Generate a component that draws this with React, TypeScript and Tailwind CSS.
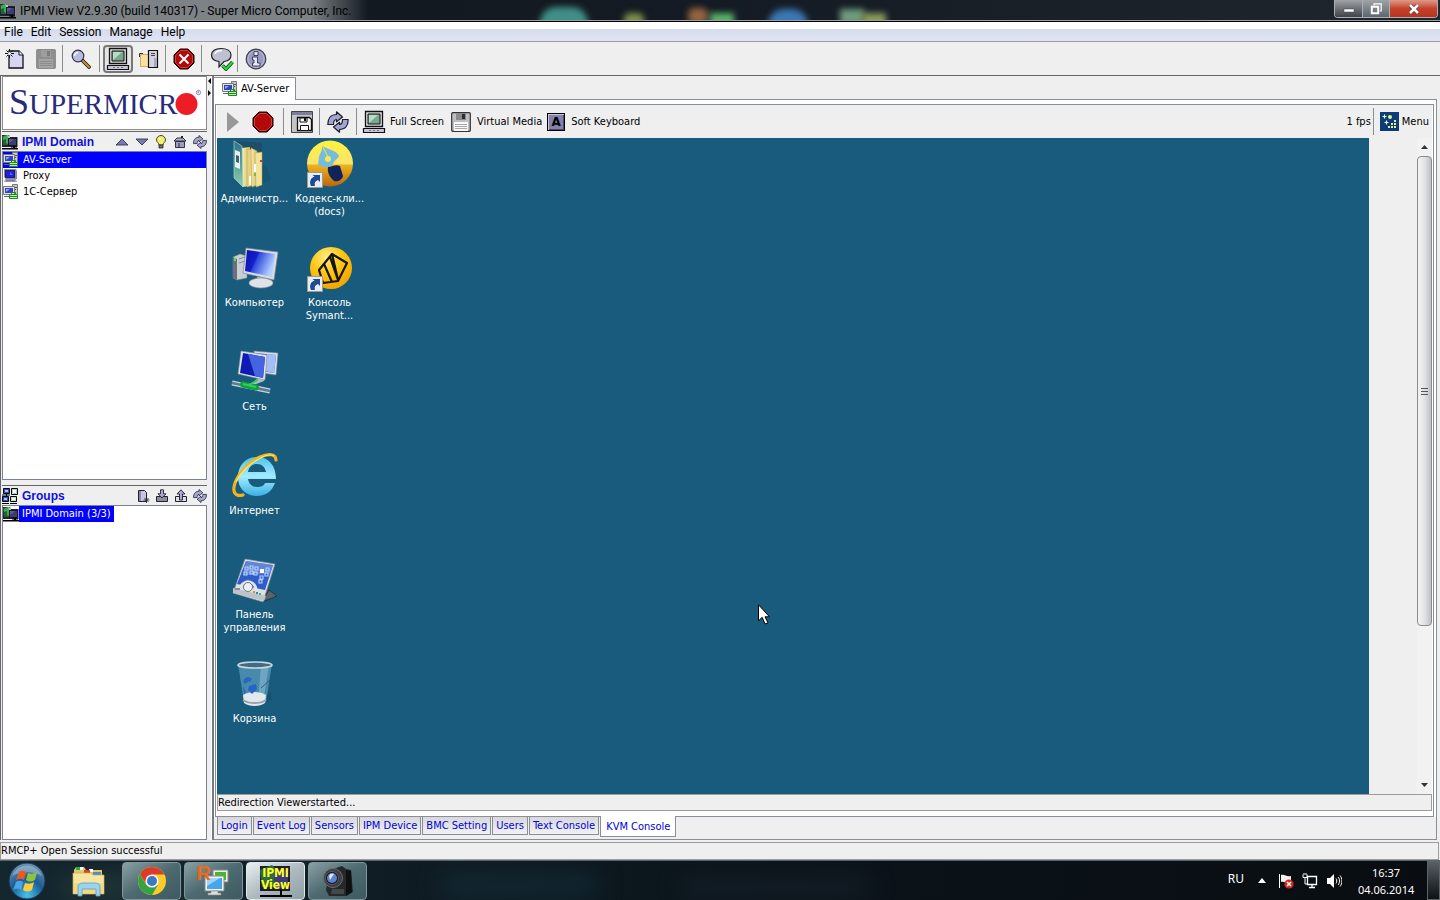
import type { ReactNode } from "react";

type IconProps = { className?: string };

/* ---------- small tree / header icons ---------- */

function DomainIcon({ className = "w-4 h-4" }: IconProps) {
  return (
    <svg viewBox="0 0 16 16" className={`shrink-0 ${className}`} aria-hidden="true">
      <path d="M0 1h7l1 2h8v10H0z" fill="#20222e" />
      <path d="M0 2l4-1 2 2v8H1z" fill="#2a5c38" />
      <path d="M1 3l4-2 1 1v8l-2-1V5L1 6z" fill="#3fae52" />
      <path d="M5 1l3 1v2H6z" fill="#9fd8a8" />
      <path d="M6 4h9v8H6z" fill="#15171d" />
      <path d="M7 5h7v6H7z" fill="#3d3d74" />
      <path d="M7 5h5L7 9z" fill="#5c5c98" />
      <path d="M15 3h1v10h-1z" fill="#8a8a98" />
      <path d="M0 14h16v1.500H0zM11 12h2v3h-2zM9 12.500h6v1H9z" fill="#000" />
    </svg>
  );
}

function ServerIcon({ className = "w-4 h-4" }: IconProps) {
  return (
    <svg viewBox="0 0 16 16" className={className} aria-hidden="true">
      <path d="M9.500.5h5v14h-5z" fill="#c9c9c9" stroke="#777" />
      <path d="M11 3.500h3M11 5.500h2" stroke="#555" />
      <path d="M.5 2.500h11v8H.5z" fill="#e2e2ea" stroke="#777" />
      <path d="M2 4h8v5H2z" fill="#2f44c0" />
      <path d="M3 5h4L3 8z" fill="#93a4f0" />
      <path d="M1 12.500h6" stroke="#666" />
      <path d="M6.500 10.500h8v4h-8z" fill="#c6f0a8" stroke="#1c8a20" />
      <path d="M8.500 10.500v-2h4v2M6.500 12.500h8" stroke="#1c8a20" fill="none" />
    </svg>
  );
}

function ProxyIcon({ className = "w-4 h-4" }: IconProps) {
  return (
    <svg viewBox="0 0 16 16" className={className} aria-hidden="true">
      <path d="M1 1h12l1 2v8H3L1 9z" fill="#8888a8" />
      <path d="M2 2h10v8H2z" fill="#20205c" />
      <path d="M3 3h8v6H3z" fill="#1d1df0" />
      <path d="M7 4l3 3H7z" fill="#5c7cff" />
      <path d="M2 11h11l1 3H1z" fill="#a9a9bd" />
      <path d="M3 12h9M3 13h9" stroke="#5d5d78" strokeWidth=".6" />
    </svg>
  );
}

function GroupsIcon({ className = "w-4 h-4" }: IconProps) {
  return (
    <svg viewBox="0 0 16 16" className={className} aria-hidden="true">
      <g stroke="#000">
        <path d="M1.500.5h6v5h-6z" fill="#2a4fd8" />
        <path d="M9.500.5h6v6h-6z" fill="#a7d8d8" />
        <path d="M.5 8.500h6v5h-6z" fill="#2a4fd8" />
        <path d="M8.500 8.500h6v5h-6z" fill="#bfe3d5" />
        <path d="M0 7h8M0 15.500h7M8 15.500h7M4.500 6v3" fill="none" />
      </g>
      <path d="M3 2h3v2H3zM2 10h3v2H2z" fill="#a8c4ff" />
      <path d="M11 2h3v3h-3zM10 10h3v2h-3z" fill="#f2fffa" />
    </svg>
  );
}

function RefreshIcon({ className = "w-4 h-4" }: IconProps) {
  const arrow = "M.8 13.500C.8 7 4 3.500 9.500 3.500V.8L15.500 6l-6 4.800V8.500c-2 0-3 2-3 5z";
  return (
    <svg viewBox="0 0 22 22" className={className} aria-hidden="true">
      <g fill="#a4a4d0" stroke="#1c1c30" strokeWidth="1.200" strokeLinejoin="round">
        <path d={arrow} />
        <path d={arrow} transform="rotate(180 11 11)" />
      </g>
    </svg>
  );
}

function TriangleIcon({ down = false }: { down?: boolean }) {
  return (
    <svg viewBox="0 0 14 8" className="h-2 w-3.5" aria-hidden="true">
      <path d={down ? "M1 1h12L7 7z" : "M1 7h12L7 1z"} fill="#7a7ab8" stroke="#33334a" strokeWidth=".9" />
    </svg>
  );
}

function BulbIcon() {
  return (
    <svg viewBox="0 0 12 16" className="h-4 w-3" aria-hidden="true">
      <path d="M6 1.500A4.500 4.500 0 0 0 1.500 6c0 2 2.500 3 2.500 5h4c0-2 2.500-3 2.500-5A4.500 4.500 0 0 0 6 1.500z" fill="#f5f06a" stroke="#44421a" />
      <path d="M4 4h2v2H4z" fill="#fff" />
      <path d="M4 11h4v3H4z" fill="#77756a" stroke="#222" strokeWidth=".8" />
    </svg>
  );
}

function HomeIcon() {
  return (
    <svg viewBox="0 0 14 14" className="size-3.5" aria-hidden="true">
      <path d="M2.500 6.500h9v6h-9z" fill="#9c9cc4" stroke="#222" strokeWidth=".9" />
      <path d="M1 6l3-3h6l3 3z" fill="#b4b4d8" stroke="#222" strokeWidth=".9" />
      <path d="M5 8h2v4H5z" fill="#666688" />
      <path d="M8 1h2v2H8z" fill="#222" />
    </svg>
  );
}

function GroupPageIcon() {
  return (
    <svg viewBox="0 0 14 14" className="size-3.5" aria-hidden="true">
      <path d="M2.500 1.500h6l2 2v9h-8z" fill="#c5c5e2" stroke="#222" />
      <path d="M3 2h2v10H3z" fill="#8888b8" />
      <path d="M10.500 8v6M7.500 11h6M8.500 9l4 4M12.500 9l-4 4" stroke="#222" strokeWidth=".8" />
    </svg>
  );
}

function TrayArrowIcon({ up = false }: { up?: boolean }) {
  return (
    <svg viewBox="0 0 14 14" className="size-3.5" aria-hidden="true">
      <path d="M1.500 7.500h11v5h-11z" fill={up ? "#dcdcec" : "#8c8ca0"} stroke="#222" />
      <path
        d={up ? "M7 .8L11 5H8.500v6h-3V5H3z" : "M5.500.8h3v4H11L7 9 3 4.800h2.500z"}
        fill="#a8a8d8"
        stroke="#222"
        strokeWidth=".9"
      />
    </svg>
  );
}

/* ---------- toolbar icons ---------- */

function NewIcon() {
  return (
    <svg viewBox="0 0 20 22" className="h-[22px] w-5" aria-hidden="true">
      <path d="M4 3h10l4 4v13H4z" fill="#d6d6f2" stroke="#111" strokeWidth="1.300" />
      <path d="M14 3v4h4" fill="#fff" stroke="#111" />
      <path d="M4.500 1v9M0 5.500h9M1.500 2.500l6 6M7.500 2.500l-6 6" stroke="#111" />
      <circle cx="4.500" cy="5.500" r="1.500" fill="#fff" />
    </svg>
  );
}

function FloppyIcon({ muted = false }: { muted?: boolean }) {
  return (
    <svg viewBox="0 0 20 20" className="size-5" aria-hidden="true">
      <rect x=".7" y=".7" width="18.600" height="18.600" rx="1" fill={muted ? "#8f8f8f" : "#bfbfc2"} stroke={muted ? "#8a8a8a" : "#333"} strokeWidth="1.200" />
      <path d="M5 1h10v7H5z" fill={muted ? "#9d9d9d" : "#8b8b8f"} />
      <path d="M11 2h3v5h-3z" fill={muted ? "#7c7c7c" : "#2d2d2d"} />
      <path d="M3 10h14v9H3z" fill={muted ? "#a5a5a5" : "#f7f7f7"} />
      <path d="M4 12.500h12M4 14.500h12M4 16.500h12" stroke={muted ? "#8c8c8c" : "#a9a9a9"} />
    </svg>
  );
}

function SearchIcon() {
  return (
    <svg viewBox="0 0 20 20" className="size-5" aria-hidden="true">
      <path d="M11 11l7 7" stroke="#111" strokeWidth="3.600" strokeLinecap="round" />
      <path d="M12 12l6 6" stroke="#c68a3e" strokeWidth="2.200" strokeLinecap="round" />
      <circle cx="7" cy="7" r="5.800" fill="#b9bce0" stroke="#33334c" strokeWidth="1.200" />
      <path d="M3.500 7A3.500 3.500 0 0 1 7 3.500" stroke="#fff" strokeWidth="1.500" fill="none" />
    </svg>
  );
}

function ScreenIcon() {
  return (
    <svg viewBox="0 0 24 24" className="size-6 shrink-0" aria-hidden="true">
      <path d="M3.500 1.500h17v15h-17z" fill="#dededf" stroke="#111" strokeWidth="1.300" />
      <path d="M6 4h12v10H6z" fill="#79a890" stroke="#111" />
      <path d="M7 5h9l-9 8z" fill="#b9dcc8" />
      <path d="M1.500 18.500h21v4h-21z" fill="#c6c4d8" stroke="#111" strokeWidth="1.200" />
      <path d="M7 20.500h2M11 20.500h2M15 20.500h2" stroke="#77758c" />
    </svg>
  );
}

function CopyIcon() {
  return (
    <svg viewBox="0 0 20 20" className="size-5" aria-hidden="true">
      <path d="M1.500 5.500h9v12h-9z" fill="#f6e2a4" stroke="#d9a95c" />
      <path d="M.5 8V4.500H4" fill="none" stroke="#333" />
      <path d="M9.500 1.500h9v17h-9z" fill="#d3d3e0" stroke="#111" strokeWidth="1.200" />
      <path d="M12 4.500h4M12 6.500h4" stroke="#444" />
      <path d="M15 9h3v9h-3z" fill="#a8a8be" />
    </svg>
  );
}

function OctagonIcon({ cross = false }: { cross?: boolean }) {
  return (
    <svg viewBox="0 0 22 22" className="size-[22px]" aria-hidden="true">
      <path d="M7 1h8l6 6v8l-6 6H7l-6-6V7z" fill="#5c0000" stroke="#2a0000" />
      <path d="M7.500 2.500h7l5 5v7l-5 5h-7l-5-5v-7z" fill="#b50808" stroke="#d66" strokeWidth=".7" />
      {cross && <path d="M6.500 6.500l9 9M15.500 6.500l-9 9" stroke="#fff" strokeWidth="2" />}
    </svg>
  );
}

function ChatIcon() {
  return (
    <svg viewBox="0 0 24 24" className="size-6" aria-hidden="true">
      <path d="M11 1.500c6 0 10 2.500 10 6.500s-3 6-7 6.500L9 20v-5.500C4 14 1.500 12 1.500 8S5 1.500 11 1.500z" fill="#c0c0d4" stroke="#222" strokeWidth="1.200" />
      <path d="M5 7c1-3 4-3.500 7-3.500" stroke="#fff" fill="none" strokeWidth="1.300" />
      <path d="M12.500 18.500l3.500 3.500 6.500-7" stroke="#064d0c" strokeWidth="3.600" fill="none" />
      <path d="M12.500 18.500l3.500 3.500 6.500-7" stroke="#2fd544" strokeWidth="2" fill="none" />
    </svg>
  );
}

function InfoIcon() {
  return (
    <svg viewBox="0 0 22 22" className="size-[22px]" aria-hidden="true">
      <circle cx="11" cy="11" r="9.800" fill="#9a9ac0" stroke="#3a3a50" strokeWidth="1.200" />
      <circle cx="11" cy="11" r="8.200" fill="none" stroke="#c8c8e0" strokeWidth=".8" />
      <path d="M9 3.500h4v4H9zM7.500 9h5v6H15v3H7.500v-3H9v-3H7.500z" fill="#e8e8f8" stroke="#333348" strokeWidth=".9" />
    </svg>
  );
}

function SaveScreenIcon() {
  return (
    <svg viewBox="0 0 24 24" className="size-6" aria-hidden="true">
      <path d="M1.500 1.500h21v21h-21z" fill="#c4c4c8" stroke="#444" />
      <path d="M2 2h20v3H2z" fill="#7d7d9c" />
      <path d="M7.500 7.500h12l2 2v11h-14z" fill="#f4f4f4" stroke="#111" strokeWidth="1.300" />
      <path d="M10 8h7v4h-7zM10.500 15.500h8v5h-8z" fill="#fff" stroke="#111" />
      <path d="M14 8h2v3h-2z" fill="#111" />
    </svg>
  );
}

function KeyAIcon() {
  return (
    <span className="flex size-[18px] items-center justify-center border border-black bg-[#8482a8] font-['DejaVu_Sans'] text-[12px] leading-none font-bold text-black shadow-[inset_1px_1px_0_#c8c8e0,inset_-1px_-1px_0_#4a4a70]">
      A
    </span>
  );
}

function MenuIcon() {
  return (
    <svg viewBox="0 0 19 19" className="size-[19px]" aria-hidden="true">
      <path d="M0 0h19v19H0z" fill="#0b3b78" />
      <g fill="#e9f08c">
        <path d="M8 14h2v2H8zM11 14h2v2h-2zM14 14h2v2h-2zM11 11h2v2h-2zM14 11h2v2h-2zM14 8h2v2h-2z" />
        <circle cx="10" cy="5" r="2" />
      </g>
      <path d="M4.500 2.500v4M2.500 4.500h4M6.500 8.500v4M4.500 10.500h4" stroke="#e8ffd8" strokeWidth="1.200" />
    </svg>
  );
}

/* ---------- desktop icons ---------- */

function ShortcutArrow() {
  return (
    <g>
      <path d="M1.500 32.500h15v15h-15z" fill="#e6edf6" stroke="#a39a8c" />
      <path d="M5 46c-2-4-.5-8 3.500-9.500L6.500 35H14v7l-2-2c-3 1-4 3-3 6z" fill="#1c4b94" />
    </g>
  );
}

function FolderIcon() {
  return (
    <svg viewBox="0 0 48 48" className="size-12" aria-hidden="true">
      <defs>
        <linearGradient id="fBack" x1="0" y1="0" x2="0" y2="1">
          <stop offset="0" stopColor="#2b6f8e" />
          <stop offset="1" stopColor="#8fd0a8" />
        </linearGradient>
        <linearGradient id="fPaper" x1="0" y1="0" x2="1" y2="0">
          <stop offset="0" stopColor="#f8f0b4" />
          <stop offset="1" stopColor="#d6bc5c" />
        </linearGradient>
      </defs>
      <path d="M28 46l12-7-4-11-6-4z" fill="#0f4560" opacity=".3" />
      <path d="M3 1l28 2v9L12 9z" fill="#1d4d68" />
      <path d="M11 8l8-1v39l-8 1z" fill="url(#fPaper)" />
      <path d="M16 9l8 1v35l-8 2z" fill="#e6d183" stroke="#b79a46" strokeWidth=".5" />
      <path d="M20 8l6 3v34l-5 2z" fill="url(#fPaper)" stroke="#b79a46" strokeWidth=".5" />
      <path d="M24 13l7-1v33l-6 2z" fill="#f2e39c" stroke="#b79a46" strokeWidth=".5" />
      <path d="M3 1l8 5 1 41-9-9z" fill="url(#fBack)" stroke="#9ed8d4" strokeWidth=".7" />
      <path d="M4 10l5 2v17l-5-2z" fill="#e5f2f5" />
      <path d="M5 15l3 1v7l-3-1z" fill="#44606c" />
      <path d="M29 20h2v2h-2z" fill="#d23a2a" />
      <path d="M23 33h2v3h-2z" fill="#6cc238" />
      <path d="M18 36h2v9h-2zM23 24h2v8h-2z" fill="#fff" />
    </svg>
  );
}

function CodexIcon() {
  return (
    <svg viewBox="0 0 48 48" className="size-12" aria-hidden="true">
      <defs>
        <linearGradient id="cod" x1="0" y1="0" x2="0" y2="1">
          <stop offset="0" stopColor="#fff23c" />
          <stop offset=".5" stopColor="#fbe46c" />
          <stop offset=".54" stopColor="#eeb31c" />
          <stop offset="1" stopColor="#b9670a" />
        </linearGradient>
      </defs>
      <circle cx="24" cy="23.500" r="23" fill="url(#cod)" />
      <path d="M16 5c3 4 15 5 17 11-1 3-5 4-6 8-4 5-9 3-15 1 1-4 0-7 2-11 2-3 2-6 2-9z" fill="#76bcdc" />
      <path d="M16 5l6 12" stroke="#f7e84e" />
      <circle cx="22" cy="19" r="3" fill="#f7e84e" />
      <path d="M22 27c4 0 8-3 12-1l3 10c-1 4-5 6-9 5-4-4-7-8-6-14z" fill="#10245c" />
      <ShortcutArrow />
    </svg>
  );
}

function ComputerIcon() {
  return (
    <svg viewBox="0 0 48 48" className="size-12" aria-hidden="true">
      <defs>
        <linearGradient id="scr" x1="0" y1="0" x2="1" y2=".4">
          <stop offset="0" stopColor="#0a10a8" />
          <stop offset=".42" stopColor="#1420d0" />
          <stop offset=".46" stopColor="#2c48dc" />
          <stop offset="1" stopColor="#b4d0ff" />
        </linearGradient>
      </defs>
      <path d="M2 13l7-3 7 2v22L6 36l-4-2z" fill="#c9ced4" stroke="#75808c" strokeWidth=".6" />
      <path d="M2 13l4 2v21l-4-2z" fill="#68717c" />
      <path d="M3 14h2v3H3z" fill="#52e04c" />
      <path d="M8 15l6-2M8 19l6-2" stroke="#858d96" />
      <path d="M26 33h9v6h-9z" fill="#aeb6be" />
      <ellipse cx="30" cy="39" rx="12" ry="5" fill="#dfe3e7" stroke="#89929c" strokeWidth=".6" />
      <path d="M15 4l32 4-4 28-31-7z" fill="#d8dde4" stroke="#7c8692" strokeWidth=".7" />
      <path d="M16 6l28 4-3 23-27-6z" fill="url(#scr)" />
    </svg>
  );
}

function SymantecIcon() {
  return (
    <svg viewBox="0 0 48 48" className="size-12" aria-hidden="true">
      <defs>
        <radialGradient id="sym" cx=".4" cy=".25" r=".7">
          <stop offset="0" stopColor="#ffec8a" />
          <stop offset=".5" stopColor="#ffc914" />
          <stop offset="1" stopColor="#f5a900" />
        </radialGradient>
      </defs>
      <circle cx="25" cy="24" r="21" fill="url(#sym)" />
      <path d="M13 26L26 10l15 9-9 18-15 2zM18 20l8 18M24 13l8 23M26 10l6 26" fill="none" stroke="#17150a" strokeWidth="2.200" strokeLinejoin="round" />
      <ShortcutArrow />
    </svg>
  );
}

function NetworkIcon() {
  return (
    <svg viewBox="0 0 48 48" className="size-12" aria-hidden="true">
      <path d="M23 3l24 2-2 22-20-3z" fill="#dbe0e6" stroke="#7c8692" strokeWidth=".6" />
      <path d="M25 5l20 2-2 18-18-3z" fill="#3c5ce0" />
      <path d="M36 6l9 1-2 18-9-2z" fill="#a5bdf6" />
      <path d="M27 30h7l-1 3-8 3h-5z" fill="#b7bec6" />
      <path d="M10 3l26 4-2 25-27-6z" fill="#e4e8ee" stroke="#7c8692" strokeWidth=".6" />
      <path d="M12 5l22 4-2 21-23-5z" fill="#0d1cb4" />
      <path d="M17 6l17 3-2 21-8-2z" fill="#4564e0" />
      <path d="M1 35l38 8" stroke="#c8d4dc" strokeWidth="5" />
      <path d="M1 35l38 8" stroke="#5c7c90" strokeWidth="2.500" />
      <path d="M12 36.500l13 3" stroke="#12a040" strokeWidth="6" strokeLinecap="round" />
      <path d="M12 36l13 3M18 37l9-5" stroke="#2fd060" strokeWidth="2" />
    </svg>
  );
}

function ExplorerIcon() {
  return (
    <svg viewBox="0 0 48 48" className="size-12" aria-hidden="true">
      <defs>
        <linearGradient id="ie" x1="0" y1="0" x2="0" y2="1">
          <stop offset="0" stopColor="#4cc4ee" />
          <stop offset=".5" stopColor="#a4ecff" />
          <stop offset="1" stopColor="#38b0e4" />
        </linearGradient>
      </defs>
      <path d="M45 27H17c1 5 4 8 9 8 4 0 7-1 8-4h10c-3 8-9 13-18 13C14 44 7 36 7 25S14 5 26 5c12 0 19 9 19 22zM17 20h18c-1-5-4-8-9-8s-8 3-9 8z" fill="url(#ie)" />
      <path d="M45 8c0-6-7-7-16-3C18 10 8 20 4 31c-3 9 0 14 8 12" fill="none" stroke="#f2b51c" strokeWidth="3.200" strokeLinecap="round" />
      <path d="M43 4c-4-2-9-1-15 3C18 12 9 21 5 30" fill="none" stroke="#ffe678" strokeWidth="1.200" />
    </svg>
  );
}

function ControlPanelIcon() {
  return (
    <svg viewBox="0 0 48 48" className="size-12" aria-hidden="true">
      <path d="M31 46l15-6-8-6z" fill="#5b646c" stroke="#252b30" strokeWidth=".8" />
      <path d="M14 3l30 5-12 38-30-9z" fill="#dce1e6" stroke="#818b94" strokeWidth=".7" />
      <path d="M15 5l27 4-8 25L6 28z" fill="#2f5cc8" />
      <path d="M15 5l27 4-3 9-27 1z" fill="#7ea0e4" opacity=".6" />
      <g fill="none" stroke="#bcd4ff" strokeWidth="1.100">
        <path d="M14 11h3v3h-3zM13 16h3v3h-3zM19 10h3v3h-3zM19 15h3v3h-3zM24 11h3v3h-3zM23 16h3v3h-3zM35 12h3v3h-3zM34 17h3v3h-3zM29 20h3v3h-3zM28 24h3v3h-3z" />
      </g>
      <path d="M29 13h4v4h-4z" fill="#fff" />
      <path d="M2 32l33 8-2 5-31-8z" fill="#bcc3ca" />
      <path d="M10 30a8 8 0 0 1 15 4" fill="none" stroke="#e4e6e8" strokeWidth="3" />
      <circle cx="17" cy="31" r="4.500" fill="#eef1f4" stroke="#70787f" />
      <path d="M4 32h5v2H4z" fill="#888f96" />
      <path d="M22 35h2v2h-2z" fill="#e88a28" />
      <path d="M25 36h2v2h-2z" fill="#3c7ce0" />
      <path d="M28 37h2v2h-2z" fill="#42c048" />
    </svg>
  );
}

function BinIcon() {
  return (
    <svg viewBox="0 0 48 48" className="size-12" aria-hidden="true">
      <path d="M32 44l9-5-2-9z" fill="#0f4560" opacity=".4" />
      <path d="M7 4h34l-6 38c-5 4-17 4-22 0z" fill="#6fb0d4" opacity=".55" />
      <path d="M30 5h8l-6 38h-5z" fill="#a8d0e4" opacity=".4" />
      <path d="M12 35c6-4 17-4 23 0l-1 8c-5 4-16 4-21 0z" fill="#e3e8ec" />
      <path d="M12 40c6 4 17 4 23 0" stroke="#98a2aa" fill="none" strokeWidth="2" />
      <path d="M12 22c1-5 6-6 9-3l-2 3c-2-1-3 0-4 2zM18 26l7-2 1 5-5 5-4-4zM12 26l3 6-2 2z" fill="#2565c8" />
      <path d="M39 20l-9 8" stroke="#2f5b74" />
      <ellipse cx="24" cy="5" rx="17" ry="3" fill="#3d6d86" stroke="#cfd6da" strokeWidth="1.600" />
    </svg>
  );
}

const desktopColumns = [
  [
    { label: ["Администр..."], icon: <FolderIcon /> },
    { label: ["Компьютер"], icon: <ComputerIcon /> },
    { label: ["Сеть"], icon: <NetworkIcon /> },
    { label: ["Интернет"], icon: <ExplorerIcon /> },
    { label: ["Панель", "управления"], icon: <ControlPanelIcon /> },
    { label: ["Корзина"], icon: <BinIcon /> },
  ],
  [
    { label: ["Кодекс-кли...", "(docs)"], icon: <CodexIcon /> },
    { label: ["Консоль", "Symant..."], icon: <SymantecIcon /> },
  ],
];

const menus = ["File", "Edit", "Session", "Manage", "Help"];

const hosts = [
  { name: "AV-Server", icon: <ServerIcon />, selected: true },
  { name: "Proxy", icon: <ProxyIcon />, selected: false },
  { name: "1С-Сервер", icon: <ServerIcon />, selected: false },
];

const bottomTabs = ["Login", "Event Log", "Sensors", "IPM Device", "BMC Setting", "Users", "Text Console"];

/* ---------- window parts ---------- */

function TitleBar() {
  return (
    <header className="relative flex h-[22px] shrink-0 items-center overflow-hidden border-b border-black bg-gradient-to-r from-[#12171d] via-[#141b24] to-[#20262c]">
      {/* blurred icons behind the glass */}
      <div className="absolute -left-4 top-0 h-5 w-96 bg-gradient-to-r from-[#7c8286] from-85% to-transparent" />
      <div className="absolute left-[540px] top-[7px] h-8 w-12 rounded-full bg-[#3f8f86] blur-[3px]" />
      <div className="absolute left-[624px] top-[13px] h-4 w-5 rounded-md bg-[#7f8f4c] blur-[3px]" />
      <div className="absolute left-[688px] top-[8px] h-4 w-5 rounded-md bg-[#94633f] blur-[3px]" />
      <div className="absolute left-[710px] top-[13px] h-4 w-6 bg-[#5bb268] blur-[3px]" />
      <div className="absolute left-[768px] top-[9px] h-8 w-10 rounded-full bg-[#3a78b4] blur-[3px]" />
      <div className="absolute left-[840px] top-[9px] h-4 w-6 bg-[#6f9c7c] blur-[3px]" />
      <div className="absolute left-[862px] top-[13px] h-4 w-6 bg-[#8a9c5c] blur-[3px]" />
      <div className="absolute inset-x-0 bottom-0 h-px bg-[#9a9fa4]" />
      <div className="relative flex items-center gap-1">
        <DomainIcon />
        <h1 className="font-[Roboto,sans-serif] text-[12px] leading-5 text-black">
          IPMI View V2.9.30 (build 140317) - Super Micro Computer, Inc.
        </h1>
      </div>
      <div className="relative mr-[2px] ml-auto flex h-[18px] self-start overflow-hidden rounded-b border border-t-0 border-[#aab0b4]">
        <button aria-label="Minimize" className="flex w-7 items-center justify-center border-r border-[#aab0b4] bg-gradient-to-b from-[#a0a4a8] to-[#3e444a]">
          <svg viewBox="0 0 12 10" className="h-2.5 w-3">
            <path d="M1 5h10v3H1z" fill="#fff" stroke="#444" strokeWidth=".5" />
          </svg>
        </button>
        <button aria-label="Restore" className="flex w-[27px] items-center justify-center border-r border-[#aab0b4] bg-gradient-to-b from-[#a0a4a8] to-[#5b666e]">
          <svg viewBox="0 0 12 12" className="size-3" fill="none" stroke="#fff">
            <path d="M4 2.500V.8h7.200V8H9.500" strokeWidth="1.200" />
            <path d="M1.800 3.800h6.400v6.400H1.800z" strokeWidth="2" />
          </svg>
        </button>
        <button aria-label="Close" className="flex w-[47px] items-center justify-center bg-gradient-to-b from-[#dd9a88] via-[#c5412c] to-[#b8341e]">
          <svg viewBox="0 0 12 10" className="h-2.5 w-3">
            <path d="M2 1l8 8M10 1L2 9" stroke="#5a3030" strokeWidth="4" />
            <path d="M2 1l8 8M10 1L2 9" stroke="#fff" strokeWidth="2.600" />
          </svg>
        </button>
      </div>
    </header>
  );
}

function Separator() {
  return <div className="h-[27px] w-px shrink-0 bg-[#8c8c8c]" />;
}

function ToolButton({ label, className, children }: { label: string; className: string; children: ReactNode }) {
  return (
    <button aria-label={label} className={`flex h-7 shrink-0 items-center justify-center ${className}`}>
      {children}
    </button>
  );
}

function MainToolbar() {
  return (
    <div className="flex h-[34px] shrink-0 items-center border-b border-[#666] bg-[#efefef]">
      <ToolButton label="New" className="w-[30px]"><NewIcon /></ToolButton>
      <ToolButton label="Save" className="w-8"><FloppyIcon muted /></ToolButton>
      <Separator />
      <ToolButton label="Find" className="w-9"><SearchIcon /></ToolButton>
      <Separator />
      <ToolButton label="Console" className="mx-[3px] w-[30px] rounded border-2 border-[#777] bg-[#e4e4e4]"><ScreenIcon /></ToolButton>
      <ToolButton label="Copy" className="mr-1 w-[25px]"><CopyIcon /></ToolButton>
      <Separator />
      <ToolButton label="Stop" className="w-[35px]"><OctagonIcon cross /></ToolButton>
      <Separator />
      <ToolButton label="Messages" className="w-[35px] pl-1"><ChatIcon /></ToolButton>
      <Separator />
      <ToolButton label="About" className="w-[35px]"><InfoIcon /></ToolButton>
    </div>
  );
}

function Sidebar() {
  return (
    <aside className="flex w-[207px] shrink-0 flex-col border-l border-[#666] pl-px">
      <div className="flex h-[54px] shrink-0 items-center border border-[#8c8c8c] bg-white pl-[6px]">
        <div className="flex items-baseline font-['Liberation_Serif',serif] text-[29px] leading-[40px] text-[#2a2a7c]">
          <span className="text-[36px]">S</span>
          <span>UPERMICR</span>
        </div>
        <svg viewBox="0 0 28 28" className="-ml-[2px] size-7 shrink-0" role="img" aria-label="O">
          <circle cx="11.500" cy="15" r="11" fill="#ee1c25" />
          <circle cx="23.500" cy="3.500" r="2.200" fill="none" stroke="#5a5a9c" strokeWidth=".7" />
          <path d="M23 4.500v-2h1v1h-1l1 1" fill="none" stroke="#5a5a9c" strokeWidth=".4" />
        </svg>
      </div>

      <div className="mt-px flex h-[20px] shrink-0 items-center border-t border-[#666]">
        <DomainIcon />
        <h2 className="ml-1 font-['Liberation_Sans',sans-serif] text-[12px] font-bold text-[#1010e0]">IPMI Domain</h2>
        <div className="ml-auto flex items-center gap-[6px]">
          <button aria-label="Move up"><TriangleIcon /></button>
          <button aria-label="Move down"><TriangleIcon down /></button>
          <button aria-label="Identify"><BulbIcon /></button>
          <button aria-label="Home"><HomeIcon /></button>
          <button aria-label="Refresh"><RefreshIcon className="size-3.5" /></button>
        </div>
      </div>
      <ul className="min-h-0 flex-1 border border-[#7a8290] bg-white">
        {hosts.map((host) => (
          <li key={host.name} className={`flex h-4 items-center gap-1 ${host.selected ? "bg-[#0000ff] text-white" : ""}`}>
            {host.icon}
            {host.name}
          </li>
        ))}
      </ul>

      <div className="mt-[5px] flex h-[20px] shrink-0 items-center border-t border-[#666]">
        <GroupsIcon />
        <h2 className="ml-1 font-['Liberation_Sans',sans-serif] text-[12px] font-bold text-[#1010e0]">Groups</h2>
        <div className="ml-auto flex items-center gap-[5px]">
          <button aria-label="New group"><GroupPageIcon /></button>
          <button aria-label="Import"><TrayArrowIcon /></button>
          <button aria-label="Export"><TrayArrowIcon up /></button>
          <button aria-label="Refresh groups"><RefreshIcon className="size-3.5" /></button>
        </div>
      </div>
      <ul className="h-[335px] shrink-0 border border-[#7a8290] bg-white">
        <li className="flex h-4 items-center">
          <DomainIcon />
          <span className="bg-[#0000ff] px-[3px] leading-4 text-white">IPMI Domain (3/3)</span>
        </li>
      </ul>
    </aside>
  );
}

function Splitter() {
  return (
    <div className="flex w-[5px] shrink-0 flex-col items-end overflow-hidden border-r border-white pt-[2px]">
      <svg viewBox="0 0 3 18" className="h-[18px] w-[3px]" aria-hidden="true">
        <path d="M3 0v6L0 3zM0 12v6l3-3z" fill="#000" />
      </svg>
    </div>
  );
}

function KvmToolbar() {
  return (
    <div className="flex h-[33px] shrink-0 items-center bg-[#efefef]">
      <ToolButton label="Play" className="w-[31px]">
        <svg viewBox="0 0 14 22" className="h-[22px] w-3.5">
          <path d="M1 1l12 10L1 21z" fill="#989898" />
        </svg>
      </ToolButton>
      <ToolButton label="Stop" className="mr-[5px] w-[30px]"><OctagonIcon /></ToolButton>
      <Separator />
      <ToolButton label="Capture" className="w-[35px]"><SaveScreenIcon /></ToolButton>
      <Separator />
      <ToolButton label="Refresh" className="w-[36px]"><RefreshIcon className="size-[22px]" /></ToolButton>
      <Separator />
      <button className="ml-[5px] flex items-center gap-1"><ScreenIcon />Full Screen</button>
      <button className="ml-[7px] flex items-center gap-[6px]"><FloppyIcon />Virtual Media</button>
      <button className="ml-[5px] flex items-center gap-[6px]"><KeyAIcon />Soft Keyboard</button>
      <span className="mr-[2px] ml-auto">1 fps</span>
      <Separator />
      <button className="mr-[3px] ml-[6px] flex items-center gap-[3px]"><MenuIcon />Menu</button>
    </div>
  );
}

function Desktop() {
  return (
    <div className="flex min-h-0 flex-1 bg-[#efefef]">
      <div className="relative mr-12 flex flex-1 overflow-hidden bg-[#195b7c] text-white">
        {desktopColumns.map((column, i) => (
          <div key={i} className="w-[75px]">
            {column.map((item) => (
              <button key={item.label[0]} className="flex h-[104px] w-full flex-col items-center pt-[2px] leading-[13px] whitespace-nowrap">
                {item.icon}
                <span className="mt-1">
                  {item.label.map((line) => (
                    <span key={line} className="block">{line}</span>
                  ))}
                </span>
              </button>
            ))}
          </div>
        ))}
        <svg viewBox="0 0 12 21" className="absolute left-[541px] top-[466px] h-[21px] w-3" aria-hidden="true">
          <path d="M.5.8v16l3.700-3.500L7 20l3-1.200-3-6h4.500z" fill="#fff" stroke="#000" />
        </svg>
      </div>
      <div className="flex w-[15px] shrink-0 flex-col items-center bg-[#f2f2f2]">
        <svg viewBox="0 0 7 4" className="my-[7px] h-1 w-[7px]" aria-hidden="true"><path d="M0 4l3.500-4L7 4z" fill="#333" /></svg>
        <div className="flex w-full basis-[470px] flex-col items-center justify-center gap-[2px] rounded-sm border border-[#8b8b8b] bg-gradient-to-r from-[#f4f4f4] via-[#e2e2e6] to-[#bfbfc8]">
          <i className="h-px w-[7px] bg-[#555]" />
          <i className="h-px w-[7px] bg-[#555]" />
          <i className="h-px w-[7px] bg-[#555]" />
        </div>
        <svg viewBox="0 0 7 4" className="mt-auto mb-[7px] h-1 w-[7px]" aria-hidden="true"><path d="M0 0h7L3.500 4z" fill="#333" /></svg>
      </div>
    </div>
  );
}

function SessionPanel() {
  return (
    <main className="mr-[3px] flex min-w-0 flex-1 flex-col border-l-2 border-[#777b84] bg-[#efefef]">
      <div className="flex h-6 shrink-0 items-end">
        <button className="flex h-[23px] items-center gap-[3px] border border-b-0 border-l-0 border-[#8a8e98] bg-white pr-[6px] pl-2">
          <ServerIcon />
          AV-Server
        </button>
        <div className="h-px flex-1 bg-[#8a8e98]" />
      </div>
      <div className="flex min-h-0 flex-1 flex-col border-r border-b border-[#8a8e98]">
        <div className="flex min-h-0 flex-1 flex-col bg-white pt-1 pr-[2px] pl-px">
          <div className="flex min-h-0 flex-1 flex-col border border-[#8a8e98] bg-white pr-px pb-[5px] pl-px">
            <KvmToolbar />
            <Desktop />
            <div className="flex h-[17px] shrink-0 items-center border border-[#9c9c9c] bg-[#efefef]">Redirection Viewerstarted...</div>
          </div>
        </div>
        <nav className="flex h-[22px] shrink-0 items-start pl-[3px] text-[#0000e0]">
          {bottomTabs.map((tab) => (
            <button key={tab} className="mr-px h-[18px] border border-t-0 border-[#8a8e98] bg-gradient-to-b from-[#d8d8d8] to-[#f2f2f2] px-[3px] leading-[17px]">
              {tab}
            </button>
          ))}
          <button className="-mt-px h-[21px] border border-t-0 border-[#8a8e98] bg-white px-[5px] pt-px leading-5">KVM Console</button>
        </nav>
      </div>
    </main>
  );
}

/* ---------- taskbar ---------- */

function TaskButton({ label, active = false, children }: { label: string; active?: boolean; children: ReactNode }) {
  return (
    <button
      aria-label={label}
      className={`flex h-[38px] w-[59px] items-center justify-center rounded-sm border ${
        active
          ? "border-[#dfe8ea] bg-gradient-to-br from-[#eaf0f2] via-[#aebbc0] to-[#8fa0a6]"
          : "border-[#7f979c] bg-gradient-to-br from-[#8aa0a4] via-[#4c6a70] to-[#3c5a60]"
      }`}
    >
      {children}
    </button>
  );
}

function StartOrb() {
  return (
    <svg viewBox="0 0 38 38" className="size-[38px]" aria-hidden="true">
      <defs>
        <radialGradient id="orb" cx=".5" cy=".9" r=".9">
          <stop offset="0" stopColor="#46c4ec" />
          <stop offset=".5" stopColor="#1c5c94" />
          <stop offset="1" stopColor="#6f95b4" />
        </radialGradient>
      </defs>
      <circle cx="19" cy="19" r="18" fill="url(#orb)" stroke="#16344c" />
      <path d="M4 14a16 16 0 0 1 30 0c-9-5-21-5-30 0z" fill="#fff" opacity=".28" />
      <path d="M11 10c3-2 5-1 7 0l-2 8c-2-1-5-2-8 0z" fill="#ec5a24" />
      <path d="M20 11c3 1 6 1 9-1l-2 8c-3 2-6 2-9 0z" fill="#8cc43c" />
      <path d="M8 20c3-2 5-1 7 0l-2 8c-2-1-4-2-8 0z" fill="#4ca4e4" />
      <path d="M17 21c3 1 6 1 9-1l-2 8c-3 2-6 2-9 0z" fill="#fccc3c" />
    </svg>
  );
}

function LibraryIcon() {
  return (
    <svg viewBox="0 0 34 32" className="h-8 w-[34px]" aria-hidden="true">
      <path d="M2 5l2-3h8l2 3h16v22H2z" fill="#e6c66c" />
      <path d="M4 2h6v3H4z" fill="#2ea84c" />
      <path d="M8 2h3v3H8zM17 4h4v3h-4z" fill="#fff" />
      <path d="M12 5h6v3h-6z" fill="#d8412c" />
      <path d="M21 7h8v3h-8z" fill="#4c8cd0" />
      <path d="M1 8h18l2 2h11v19H1z" fill="#f7e6a0" stroke="#c9a94c" strokeWidth=".7" />
      <path d="M2 18h30v10H2z" fill="#f1d884" />
      <path d="M6 31v-9c0-3 2-4 5-4h12c3 0 5 1 5 4v9h-4v-7H10v7z" fill="#9cd4f0" stroke="#5a9cc4" strokeWidth=".8" />
    </svg>
  );
}

function ChromeLogo() {
  return (
    <svg viewBox="0 0 30 30" className="size-[30px]" aria-hidden="true">
      <circle cx="15" cy="15" r="14" fill="#fbcb2c" />
      <path d="M15 1A14 14 0 0 0 2.900 8l6.500 10.500L15 8.500h12.400A14 14 0 0 0 15 1z" fill="#dd3b2a" />
      <path d="M2.900 8l6 10.500 12 .5L15 29A14 14 0 0 1 2.900 8z" fill="#35a244" />
      <circle cx="15" cy="15" r="6.600" fill="#f2f2f2" />
      <circle cx="15" cy="15" r="5" fill="#3b78c4" />
    </svg>
  );
}

function RemoteIcon() {
  return (
    <span className="relative block size-8">
      <svg viewBox="0 0 32 32" className="size-8" aria-hidden="true">
        <path d="M15 5h15v12H15z" fill="#eee" stroke="#888" />
        <path d="M17 7h11v8H17z" fill="#46b82c" />
        <path d="M7 11h19v15H7z" fill="#f1f1f1" stroke="#888" />
        <path d="M9 13h15v11H9z" fill="#45a6ec" />
        <path d="M9 13h13L9 21z" fill="#9ad6fc" />
        <path d="M13 26h7v2h3v2H10v-2h3z" fill="#ddd" stroke="#888" strokeWidth=".6" />
      </svg>
      <span className="absolute top-0 -left-px font-['Liberation_Sans'] text-[20px] leading-4 font-bold text-[#f06a14]">R</span>
    </span>
  );
}

function IpmiTaskIcon() {
  return (
    <span className="relative flex size-8 flex-col items-center">
      <svg viewBox="0 0 32 32" className="absolute inset-0 size-8" aria-hidden="true">
        <path d="M0 1h30v25H0z" fill="#1b1d30" />
        <path d="M0 5l12-5 5 5v17H2z" fill="#2f6a40" />
        <path d="M14 5h14v18H14z" fill="#3c3c7c" />
        <path d="M0 30h32v2H0zM20 25h2v6h-2z" fill="#000" />
      </svg>
      <span className="relative pt-[2px] text-center font-['DejaVu_Sans_Condensed'] text-[12px] leading-[12px] font-bold text-[#ffff20]">
        IPMI
        <br />
        View
      </span>
    </span>
  );
}

function CameraIcon() {
  return (
    <svg viewBox="0 0 32 32" className="size-8" aria-hidden="true">
      <path d="M14 3l6-2 4 3 5 1 2 22-7 4H7l-3-6 3-18z" fill="#26282a" />
      <path d="M24 5l5 1 1 21-6 4z" fill="#0e0f10" />
      <path d="M10 24h12v5H9z" fill="#45484b" />
      <circle cx="11" cy="13" r="9.500" fill="#3b3e42" stroke="#6a6e71" />
      <circle cx="10" cy="13" r="6.500" fill="#10141c" stroke="#5a5f66" />
      <circle cx="10" cy="13" r="5" fill="#5c84cc" />
      <path d="M7 11c1-3 4-3 5-2l-4 6z" fill="#dbe8fa" />
    </svg>
  );
}

function Taskbar() {
  return (
    <footer className="relative flex h-10 shrink-0 items-center overflow-hidden border-t border-[#55666c] bg-gradient-to-r from-[#14262e] via-[#0b141b] to-[#090d11] font-['Noto_Sans',sans-serif] text-[12px] text-white">
      {/* wallpaper glow showing through the glass */}
      <div className="absolute top-4 left-[60px] h-5 w-32 rounded-full bg-[#2f4a44] opacity-60 blur-md" />
      <div className="absolute top-3 left-[440px] h-6 w-40 rounded-full bg-[#14303a] opacity-70 blur-md" />
      <div className="absolute top-4 left-[680px] h-5 w-48 rounded-full bg-[#1b2630] opacity-60 blur-md" />
      <button aria-label="Start" className="relative ml-2"><StartOrb /></button>
      <button aria-label="Libraries" className="relative ml-[26px]"><LibraryIcon /></button>
      <div className="relative ml-4 flex gap-[3px]">
        <TaskButton label="Chrome"><ChromeLogo /></TaskButton>
        <TaskButton label="Remote desktop"><RemoteIcon /></TaskButton>
        <TaskButton label="IPMI View" active><IpmiTaskIcon /></TaskButton>
        <TaskButton label="Camera"><CameraIcon /></TaskButton>
      </div>
      <span className="mr-[14px] ml-auto pb-1">RU</span>
      <button aria-label="Show hidden icons" className="mr-3">
        <svg viewBox="0 0 8 5" className="h-[5px] w-2"><path d="M0 5l4-5 4 5z" fill="#fff" /></svg>
      </button>
      <svg viewBox="0 0 16 16" className="size-4" aria-hidden="true">
        <path d="M1.500 1v14" stroke="#fff" />
        <path d="M3 2c4-1 5 2 10 1v7c-5 1-6-2-10-1z" fill="#f1f1f1" />
        <circle cx="11" cy="11" r="4.600" fill="#d8281c" />
        <path d="M9 9l4 4M13 9l-4 4" stroke="#fff" strokeWidth="1.500" />
      </svg>
      <svg viewBox="0 0 16 16" className="ml-2 size-4" fill="none" stroke="#fff" aria-hidden="true">
        <path d="M5.500 3.500h9v8h-9zM7 14.500h6M10 12v2" strokeWidth="1.300" />
        <path d="M1 1.500v3h4v-3M3 5v6h2M2 0v2M4 0v2" />
      </svg>
      <svg viewBox="0 0 16 16" className="ml-2 size-4" aria-hidden="true">
        <path d="M1 5h3l4-4v14l-4-4H1z" fill="#fff" />
        <path d="M10 5.500c1 1.500 1 3.500 0 5M12 4c2 2 2 6 0 8M14 2.500c2.500 3 2.500 8 0 11" stroke="#fff" fill="none" />
      </svg>
      <time className="ml-4 w-14 text-center text-[11px] leading-[17px]">
        <span className="block">16:37</span>
        <span className="block">04.06.2014</span>
      </time>
      <button aria-label="Show desktop" className="ml-[13px] h-full w-[13px] border border-[#5c6468] bg-gradient-to-b from-[#596066] to-[#0e1215]" />
    </footer>
  );
}

export default function App() {
  return (
    <div className="flex h-screen flex-col overflow-hidden bg-[#efefef] font-['DejaVu_Sans_Condensed','DejaVu_Sans',sans-serif] text-[11px] leading-4 text-black">
      <TitleBar />
      <nav className="flex h-5 shrink-0 items-center gap-2 border-b border-[#9a9ca4] bg-gradient-to-b from-white from-35% via-[#d5dcec] via-36% to-[#dfe5f4] pl-1 font-[Roboto,sans-serif] text-[12px]">
        {menus.map((menu) => (
          <button key={menu}>{menu}</button>
        ))}
      </nav>
      <MainToolbar />
      <div className="flex min-h-0 flex-1">
        <Sidebar />
        <Splitter />
        <SessionPanel />
      </div>
      <div className="mt-[2px] mr-px flex h-[18px] shrink-0 items-center border border-[#9c9c9c]">RMCP+ Open Session successful</div>
      <Taskbar />
    </div>
  );
}
